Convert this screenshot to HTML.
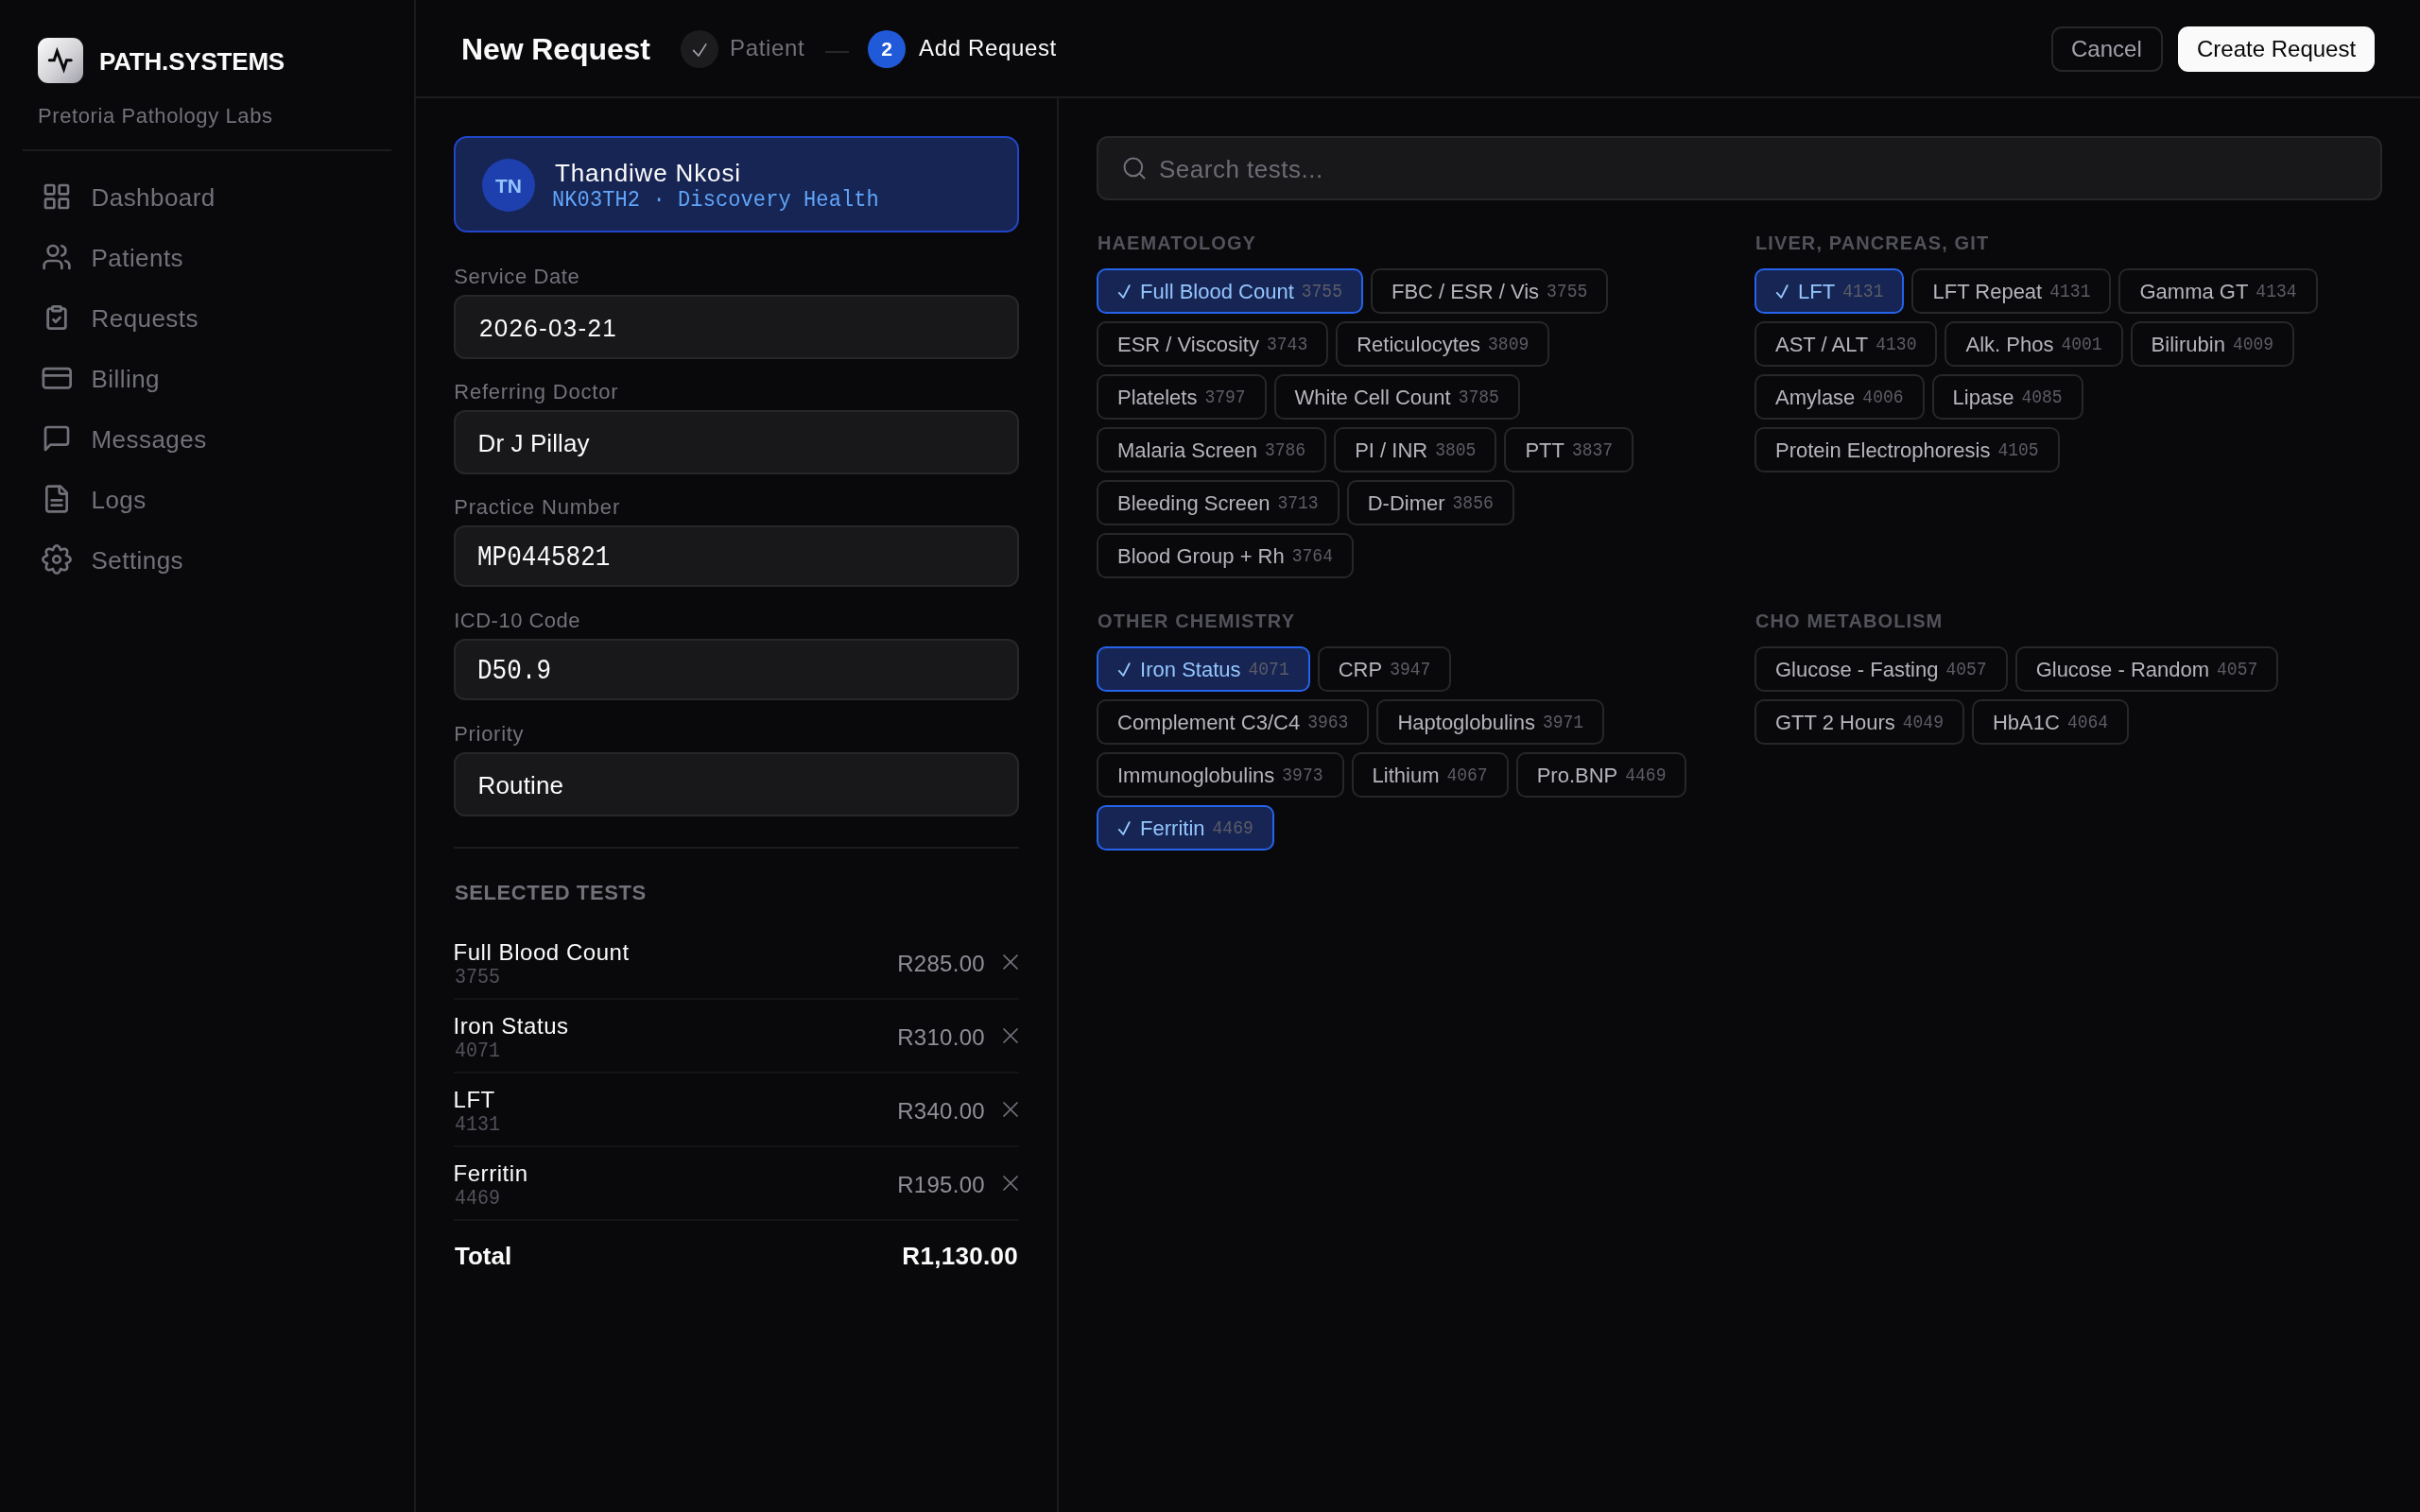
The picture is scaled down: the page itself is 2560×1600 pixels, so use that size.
<!DOCTYPE html>
<html><head><meta charset="utf-8"><title>New Request</title><style>
html,body{margin:0;padding:0;}
body{width:2560px;height:1600px;overflow:hidden;background:#09090b;position:relative;font-family:'Liberation Sans', sans-serif;}
.t{position:absolute;line-height:1;white-space:nowrap;font-family:'Liberation Sans', sans-serif;}
.t.m{font-family:'Liberation Mono', monospace;transform:scaleY(1.11);transform-origin:0 0.77em;}
svg{display:block}
#root{position:absolute;left:0;top:0;width:2560px;height:1600px;will-change:transform;}
.chips{position:absolute;width:664px;display:flex;flex-wrap:wrap;gap:8px;}
.chip{box-sizing:border-box;height:48px;border:2px solid #27272a;border-radius:10px;padding:0 20px;display:inline-flex;align-items:center;white-space:pre;font-family:'Liberation Sans', sans-serif;font-size:22px;color:#b4b4bc;background:#09090b;padding-top:2px;}
.chip .code{font-family:'Liberation Mono', monospace;font-size:18px;color:#5c5c66;margin-left:8px;transform:scaleY(1.09);transform-origin:0 0.83em;}
.chip.sel{border-color:#2563eb;background:#172554;color:#93c5fd;}
.chip .ck{display:block;flex:none;width:24.12px;height:16px;}
</style></head>
<body><div id="root">
<div style="position:absolute;left:0px;top:0px;width:440px;height:1600px;box-sizing:border-box;border-right:2px solid #1c1c1f"></div><div style="position:absolute;left:40px;top:40px;width:48px;height:48px;border-radius:11px;background:linear-gradient(135deg,#fafafa 0%,#d4d4d8 55%,#a1a1aa 100%)"></div><svg style="position:absolute;left:0;top:0" width="100" height="100" viewBox="0 0 100 100" fill="none" stroke="#09090b" stroke-width="3" stroke-linecap="round" stroke-linejoin="miter" stroke-miterlimit="10"><path d="M52.3 63.8H57.2L60.4 54.2L67.5 73.2L70.5 63.8H75.2"/></svg><div class="t" style="left:105px;top:51.64px;font-size:26px;color:#fafafa;font-weight:700;letter-spacing:-0.2px;">PATH.SYSTEMS</div><div class="t" style="left:40px;top:112.08px;font-size:22px;color:#71717a;font-weight:400;letter-spacing:0.6px;">Pretoria Pathology Labs</div><div style="position:absolute;left:24px;top:158px;width:390px;height:2px;box-sizing:border-box;background:#1c1c1f"></div><svg style="position:absolute;left:44px;top:192px" width="32" height="32" viewBox="0 0 24 24" fill="none" stroke="#71717a" stroke-width="2" stroke-linecap="round" stroke-linejoin="round"><rect width="7" height="7" x="3" y="3" rx="1"/><rect width="7" height="7" x="14" y="3" rx="1"/><rect width="7" height="7" x="14" y="14" rx="1"/><rect width="7" height="7" x="3" y="14" rx="1"/></svg><div class="t" style="left:96.5px;top:195.64px;font-size:26px;color:#71717a;font-weight:400;letter-spacing:0.45px;">Dashboard</div><svg style="position:absolute;left:44px;top:256px" width="32" height="32" viewBox="0 0 24 24" fill="none" stroke="#71717a" stroke-width="2" stroke-linecap="round" stroke-linejoin="round"><path d="M16 21v-2a4 4 0 0 0-4-4H6a4 4 0 0 0-4 4v2"/><circle cx="9" cy="7" r="4"/><path d="M22 21v-2a4 4 0 0 0-3-3.87"/><path d="M16 3.13a4 4 0 0 1 0 7.75"/></svg><div class="t" style="left:96.5px;top:259.64px;font-size:26px;color:#71717a;font-weight:400;letter-spacing:0.45px;">Patients</div><svg style="position:absolute;left:46px;top:322px" width="28" height="28" viewBox="0 0 24 24" fill="none" stroke="#71717a" stroke-width="2.4" stroke-linecap="round" stroke-linejoin="round"><rect width="8" height="4" x="8" y="2" rx="1" ry="1"/><path d="M16 4h2a2 2 0 0 1 2 2v14a2 2 0 0 1-2 2H6a2 2 0 0 1-2-2V6a2 2 0 0 1 2-2h2"/><path d="m9 14 2 2 4-4"/></svg><div class="t" style="left:96.5px;top:323.64px;font-size:26px;color:#71717a;font-weight:400;letter-spacing:0.45px;">Requests</div><svg style="position:absolute;left:42.85px;top:382.75px" width="34.5" height="34.5" viewBox="0 0 24 24" fill="none" stroke="#71717a" stroke-width="1.9" stroke-linecap="round" stroke-linejoin="round"><rect width="20" height="14" x="2" y="5" rx="2"/><line x1="2" x2="22" y1="10" y2="10"/></svg><div class="t" style="left:96.5px;top:387.64px;font-size:26px;color:#71717a;font-weight:400;letter-spacing:0.45px;">Billing</div><svg style="position:absolute;left:44px;top:448px" width="32" height="32" viewBox="0 0 24 24" fill="none" stroke="#71717a" stroke-width="2" stroke-linecap="round" stroke-linejoin="round"><path d="M21 15a2 2 0 0 1-2 2H7l-4 4V5a2 2 0 0 1 2-2h14a2 2 0 0 1 2 2z"/></svg><div class="t" style="left:96.5px;top:451.64px;font-size:26px;color:#71717a;font-weight:400;letter-spacing:0.45px;">Messages</div><svg style="position:absolute;left:44px;top:512px" width="32" height="32" viewBox="0 0 24 24" fill="none" stroke="#71717a" stroke-width="2" stroke-linecap="round" stroke-linejoin="round"><path d="M15 2H6a2 2 0 0 0-2 2v16a2 2 0 0 0 2 2h12a2 2 0 0 0 2-2V7Z"/><path d="M14 2v4a2 2 0 0 0 2 2h4"/><path d="M16 13H8"/><path d="M16 17H8"/></svg><div class="t" style="left:96.5px;top:515.64px;font-size:26px;color:#71717a;font-weight:400;letter-spacing:0.45px;">Logs</div><svg style="position:absolute;left:44px;top:576px" width="32" height="32" viewBox="-16 -16 32 32" fill="none" stroke="#71717a" stroke-width="2.6" stroke-linejoin="round"><path d="M0.00 -14.60 L0.38 -14.57 L0.76 -14.49 L1.13 -14.35 L1.49 -14.15 L1.83 -13.91 L2.16 -13.62 L2.46 -13.29 L2.75 -12.92 L3.01 -12.52 L3.24 -12.09 L3.45 -11.65 L3.64 -11.20 L3.80 -10.74 L3.95 -10.29 L4.09 -9.89 L4.48 -10.07 L4.90 -10.28 L5.34 -10.49 L5.80 -10.68 L6.26 -10.84 L6.73 -10.98 L7.19 -11.08 L7.65 -11.14 L8.10 -11.16 L8.54 -11.13 L8.96 -11.06 L9.35 -10.94 L9.71 -10.78 L10.03 -10.57 L10.32 -10.32 L10.57 -10.03 L10.78 -9.71 L10.94 -9.35 L11.06 -8.96 L11.13 -8.54 L11.16 -8.10 L11.14 -7.65 L11.08 -7.19 L10.98 -6.73 L10.84 -6.26 L10.68 -5.80 L10.49 -5.34 L10.28 -4.90 L10.07 -4.48 L9.89 -4.09 L10.29 -3.95 L10.74 -3.80 L11.20 -3.64 L11.65 -3.45 L12.09 -3.24 L12.52 -3.01 L12.92 -2.75 L13.29 -2.46 L13.62 -2.16 L13.91 -1.83 L14.15 -1.49 L14.35 -1.13 L14.49 -0.76 L14.57 -0.38 L14.60 -0.00 L14.57 0.38 L14.49 0.76 L14.35 1.13 L14.15 1.49 L13.91 1.83 L13.62 2.16 L13.29 2.46 L12.92 2.75 L12.52 3.01 L12.09 3.24 L11.65 3.45 L11.20 3.64 L10.74 3.80 L10.29 3.95 L9.89 4.09 L10.07 4.48 L10.28 4.90 L10.49 5.34 L10.68 5.80 L10.84 6.26 L10.98 6.73 L11.08 7.19 L11.14 7.65 L11.16 8.10 L11.13 8.54 L11.06 8.96 L10.94 9.35 L10.78 9.71 L10.57 10.03 L10.32 10.32 L10.03 10.57 L9.71 10.78 L9.35 10.94 L8.96 11.06 L8.54 11.13 L8.10 11.16 L7.65 11.14 L7.19 11.08 L6.73 10.98 L6.26 10.84 L5.80 10.68 L5.34 10.49 L4.90 10.28 L4.48 10.07 L4.09 9.89 L3.95 10.29 L3.80 10.74 L3.64 11.20 L3.45 11.65 L3.24 12.09 L3.01 12.52 L2.75 12.92 L2.46 13.29 L2.16 13.62 L1.83 13.91 L1.49 14.15 L1.13 14.35 L0.76 14.49 L0.38 14.57 L0.00 14.60 L-0.38 14.57 L-0.76 14.49 L-1.13 14.35 L-1.49 14.15 L-1.83 13.91 L-2.16 13.62 L-2.46 13.29 L-2.75 12.92 L-3.01 12.52 L-3.24 12.09 L-3.45 11.65 L-3.64 11.20 L-3.80 10.74 L-3.95 10.29 L-4.09 9.89 L-4.48 10.07 L-4.90 10.28 L-5.34 10.49 L-5.80 10.68 L-6.26 10.84 L-6.73 10.98 L-7.19 11.08 L-7.65 11.14 L-8.10 11.16 L-8.54 11.13 L-8.96 11.06 L-9.35 10.94 L-9.71 10.78 L-10.03 10.57 L-10.32 10.32 L-10.57 10.03 L-10.78 9.71 L-10.94 9.35 L-11.06 8.96 L-11.13 8.54 L-11.16 8.10 L-11.14 7.65 L-11.08 7.19 L-10.98 6.73 L-10.84 6.26 L-10.68 5.80 L-10.49 5.34 L-10.28 4.90 L-10.07 4.48 L-9.89 4.09 L-10.29 3.95 L-10.74 3.80 L-11.20 3.64 L-11.65 3.45 L-12.09 3.24 L-12.52 3.01 L-12.92 2.75 L-13.29 2.46 L-13.62 2.16 L-13.91 1.83 L-14.15 1.49 L-14.35 1.13 L-14.49 0.76 L-14.57 0.38 L-14.60 0.00 L-14.57 -0.38 L-14.49 -0.76 L-14.35 -1.13 L-14.15 -1.49 L-13.91 -1.83 L-13.62 -2.16 L-13.29 -2.46 L-12.92 -2.75 L-12.52 -3.01 L-12.09 -3.24 L-11.65 -3.45 L-11.20 -3.64 L-10.74 -3.80 L-10.29 -3.95 L-9.89 -4.09 L-10.07 -4.48 L-10.28 -4.90 L-10.49 -5.34 L-10.68 -5.80 L-10.84 -6.26 L-10.98 -6.73 L-11.08 -7.19 L-11.14 -7.65 L-11.16 -8.10 L-11.13 -8.54 L-11.06 -8.96 L-10.94 -9.35 L-10.78 -9.71 L-10.57 -10.03 L-10.32 -10.32 L-10.03 -10.57 L-9.71 -10.78 L-9.35 -10.94 L-8.96 -11.06 L-8.54 -11.13 L-8.10 -11.16 L-7.65 -11.14 L-7.19 -11.08 L-6.73 -10.98 L-6.26 -10.84 L-5.80 -10.68 L-5.34 -10.49 L-4.90 -10.28 L-4.48 -10.07 L-4.09 -9.89 L-3.95 -10.29 L-3.80 -10.74 L-3.64 -11.20 L-3.45 -11.65 L-3.24 -12.09 L-3.01 -12.52 L-2.75 -12.92 L-2.46 -13.29 L-2.16 -13.62 L-1.83 -13.91 L-1.49 -14.15 L-1.13 -14.35 L-0.76 -14.49 L-0.38 -14.57 L-0.00 -14.60Z"/><circle cx="0" cy="0" r="3.8"/></svg><div class="t" style="left:96.5px;top:579.64px;font-size:26px;color:#71717a;font-weight:400;letter-spacing:0.45px;">Settings</div><div style="position:absolute;left:440px;top:102px;width:2120px;height:2px;box-sizing:border-box;background:#1c1c1f"></div><div class="t" style="left:488px;top:36.48px;font-size:32px;color:#fafafa;font-weight:700;letter-spacing:-0.1px;">New Request</div><div style="position:absolute;left:720px;top:32px;width:40px;height:40px;border-radius:50%;background:#1c1c1f"></div><svg style="position:absolute;left:700px;top:30px" width="60" height="40" viewBox="700 30 60 40" fill="none" stroke="#a1a1aa" stroke-width="1.7" stroke-linecap="round" stroke-linejoin="round"><path d="M733.6 53.3L739 59L746.8 46.9"/></svg><div class="t" style="left:772px;top:39.36px;font-size:24px;color:#71717a;font-weight:400;letter-spacing:0.65px;">Patient</div><div style="position:absolute;left:873px;top:54px;width:25px;height:2px;box-sizing:border-box;background:#27272a"></div><div style="position:absolute;left:918px;top:32px;width:40px;height:40px;border-radius:50%;background:#215ad9"></div><div class="t" style="left:918px;width:40px;text-align:center;top:40.94px;font-size:21px;font-weight:700;color:#fff">2</div><div class="t" style="left:972px;top:39.36px;font-size:24px;color:#fafafa;font-weight:400;letter-spacing:0.65px;">Add Request</div><div style="position:absolute;left:2170px;top:28px;width:118px;height:48px;box-sizing:border-box;border:2px solid #27272a;border-radius:11px"></div><div class="t" style="left:2191px;top:39.86px;font-size:24px;color:#a1a1aa;font-weight:400;letter-spacing:0px;">Cancel</div><div style="position:absolute;left:2304px;top:28px;width:208px;height:48px;box-sizing:border-box;border-radius:11px;background:#fafafa"></div><div class="t" style="left:2324px;top:39.86px;font-size:24px;color:#09090b;font-weight:400;letter-spacing:0px;">Create Request</div><div style="position:absolute;left:1118px;top:104px;width:2px;height:1496px;box-sizing:border-box;background:#1c1c1f"></div><div style="position:absolute;left:480px;top:144px;width:598px;height:102px;box-sizing:border-box;border:2px solid #2146c8;border-radius:14px;background:#172554"></div><div style="position:absolute;left:510px;top:168px;width:56px;height:56px;border-radius:50%;background:#1e40af"></div><div class="t" style="left:510px;width:56px;text-align:center;top:185.64px;font-size:21px;font-weight:700;color:#93c5fd">TN</div><div class="t" style="left:587px;top:169.64px;font-size:26px;color:#fafafa;font-weight:400;letter-spacing:0.85px;">Thandiwe Nkosi</div><div class="t m" style="left:584px;top:201.56px;font-size:22px;color:#60a5fa;letter-spacing:0.1px;">NK03TH2 · Discovery Health</div><div class="t" style="left:480.2px;top:282.28px;font-size:22px;color:#71717a;font-weight:400;letter-spacing:0.6px;">Service Date</div><div style="position:absolute;left:480px;top:312px;width:598px;height:68px;box-sizing:border-box;border:2px solid #27272a;border-radius:12px;background:#18181b"></div><div class="t" style="left:507px;top:334.14px;font-size:26px;color:#fafafa;font-weight:400;letter-spacing:1.3px;">2026-03-21</div><div class="t" style="left:480.2px;top:404.08px;font-size:22px;color:#71717a;font-weight:400;letter-spacing:0.8px;">Referring Doctor</div><div style="position:absolute;left:480px;top:434px;width:598px;height:68px;box-sizing:border-box;border:2px solid #27272a;border-radius:12px;background:#18181b"></div><div class="t" style="left:505.5px;top:456.14px;font-size:26px;color:#fafafa;font-weight:400;letter-spacing:0.1px;">Dr J Pillay</div><div class="t" style="left:480.2px;top:525.88px;font-size:22px;color:#71717a;font-weight:400;letter-spacing:0.8px;">Practice Number</div><div style="position:absolute;left:480px;top:556px;width:598px;height:65px;box-sizing:border-box;border:2px solid #27272a;border-radius:12px;background:#18181b"></div><div class="t m" style="left:505px;top:578.48px;font-size:26px;color:#fafafa;letter-spacing:0px;">MP0445821</div><div class="t" style="left:480.2px;top:645.78px;font-size:22px;color:#71717a;font-weight:400;letter-spacing:0.5px;">ICD-10 Code</div><div style="position:absolute;left:480px;top:676px;width:598px;height:65px;box-sizing:border-box;border:2px solid #27272a;border-radius:12px;background:#18181b"></div><div class="t m" style="left:505px;top:698.48px;font-size:26px;color:#fafafa;letter-spacing:0px;">D50.9</div><div class="t" style="left:480.2px;top:766.08px;font-size:22px;color:#71717a;font-weight:400;letter-spacing:0.7px;">Priority</div><div style="position:absolute;left:480px;top:796px;width:598px;height:68px;box-sizing:border-box;border:2px solid #27272a;border-radius:12px;background:#18181b"></div><div class="t" style="left:505.5px;top:818.14px;font-size:26px;color:#fafafa;font-weight:400;letter-spacing:0.15px;">Routine</div><div style="position:absolute;left:480px;top:896px;width:598px;height:2px;box-sizing:border-box;background:#1c1c1f"></div><div class="t" style="left:481px;top:934.08px;font-size:22px;color:#71717a;font-weight:700;letter-spacing:0.6px;">SELECTED TESTS</div><div class="t" style="left:479.5px;top:995.86px;font-size:24px;color:#fafafa;font-weight:400;letter-spacing:0.55px;">Full Blood Count</div><div class="t m" style="left:481px;top:1024.50px;font-size:20px;color:#52525b;letter-spacing:0px;">3755</div><div class="t" style="right:1518px;top:1008.36px;font-size:24px;color:#8e8e97;font-weight:400;letter-spacing:0.3px">R285.00</div><svg style="position:absolute;left:1055px;top:1004px" width="28" height="28" viewBox="0 0 24 24" fill="none" stroke="#71717a" stroke-width="1.5" stroke-linecap="round" stroke-linejoin="round"><path d="M18 6 6 18"/><path d="m6 6 12 12"/></svg><div style="position:absolute;left:480px;top:1056px;width:598px;height:2px;box-sizing:border-box;background:#141417"></div><div class="t" style="left:479.5px;top:1073.86px;font-size:24px;color:#fafafa;font-weight:400;letter-spacing:0.55px;">Iron Status</div><div class="t m" style="left:481px;top:1102.50px;font-size:20px;color:#52525b;letter-spacing:0px;">4071</div><div class="t" style="right:1518px;top:1086.36px;font-size:24px;color:#8e8e97;font-weight:400;letter-spacing:0.3px">R310.00</div><svg style="position:absolute;left:1055px;top:1082px" width="28" height="28" viewBox="0 0 24 24" fill="none" stroke="#71717a" stroke-width="1.5" stroke-linecap="round" stroke-linejoin="round"><path d="M18 6 6 18"/><path d="m6 6 12 12"/></svg><div style="position:absolute;left:480px;top:1134px;width:598px;height:2px;box-sizing:border-box;background:#141417"></div><div class="t" style="left:479.5px;top:1151.86px;font-size:24px;color:#fafafa;font-weight:400;letter-spacing:0.55px;">LFT</div><div class="t m" style="left:481px;top:1180.50px;font-size:20px;color:#52525b;letter-spacing:0px;">4131</div><div class="t" style="right:1518px;top:1164.36px;font-size:24px;color:#8e8e97;font-weight:400;letter-spacing:0.3px">R340.00</div><svg style="position:absolute;left:1055px;top:1160px" width="28" height="28" viewBox="0 0 24 24" fill="none" stroke="#71717a" stroke-width="1.5" stroke-linecap="round" stroke-linejoin="round"><path d="M18 6 6 18"/><path d="m6 6 12 12"/></svg><div style="position:absolute;left:480px;top:1212px;width:598px;height:2px;box-sizing:border-box;background:#141417"></div><div class="t" style="left:479.5px;top:1229.86px;font-size:24px;color:#fafafa;font-weight:400;letter-spacing:0.55px;">Ferritin</div><div class="t m" style="left:481px;top:1258.50px;font-size:20px;color:#52525b;letter-spacing:0px;">4469</div><div class="t" style="right:1518px;top:1242.36px;font-size:24px;color:#8e8e97;font-weight:400;letter-spacing:0.3px">R195.00</div><svg style="position:absolute;left:1055px;top:1238px" width="28" height="28" viewBox="0 0 24 24" fill="none" stroke="#71717a" stroke-width="1.5" stroke-linecap="round" stroke-linejoin="round"><path d="M18 6 6 18"/><path d="m6 6 12 12"/></svg><div style="position:absolute;left:480px;top:1290px;width:598px;height:2px;box-sizing:border-box;background:#141417"></div><div class="t" style="left:481px;top:1315.84px;font-size:26px;color:#fafafa;font-weight:700;letter-spacing:0px;">Total</div><div class="t" style="right:1483px;top:1315.84px;font-size:26px;color:#fafafa;font-weight:700;letter-spacing:0.3px">R1,130.00</div><div style="position:absolute;left:1160px;top:144px;width:1360px;height:68px;box-sizing:border-box;border:2px solid #27272a;border-radius:12px;background:#18181b"></div><svg style="position:absolute;left:1186px;top:164px" width="28" height="28" viewBox="0 0 24 24" fill="none" stroke="#71717a" stroke-width="1.7" stroke-linecap="round" stroke-linejoin="round"><circle cx="11" cy="11" r="8"/><path d="m21 21-4.3-4.3"/></svg><div class="t" style="left:1226px;top:165.64px;font-size:26px;color:#6b6b73;font-weight:400;letter-spacing:0.5px;">Search tests...</div><div class="t" style="left:1161px;top:247.30px;font-size:20px;color:#52525b;font-weight:700;letter-spacing:1.1px;">HAEMATOLOGY</div><div class="chips" style="left:1160px;top:284px"><div class="chip sel"><svg class="ck" width="24.12" height="16" viewBox="0 0 24.12 16" fill="none" stroke="#93c5fd" stroke-width="1.9" stroke-linecap="round" stroke-linejoin="round"><path d="M1.8 8.9L6.3 13.9L12.7 1.2"/></svg>Full Blood Count<span class="code">3755</span></div><div class="chip">FBC / ESR / Vis<span class="code">3755</span></div><div class="chip">ESR / Viscosity<span class="code">3743</span></div><div class="chip">Reticulocytes<span class="code">3809</span></div><div class="chip">Platelets<span class="code">3797</span></div><div class="chip">White Cell Count<span class="code">3785</span></div><div class="chip">Malaria Screen<span class="code">3786</span></div><div class="chip">PI / INR<span class="code">3805</span></div><div class="chip">PTT<span class="code">3837</span></div><div class="chip">Bleeding Screen<span class="code">3713</span></div><div class="chip">D-Dimer<span class="code">3856</span></div><div class="chip">Blood Group + Rh<span class="code">3764</span></div></div><div class="t" style="left:1857px;top:247.30px;font-size:20px;color:#52525b;font-weight:700;letter-spacing:1.1px;">LIVER, PANCREAS, GIT</div><div class="chips" style="left:1856px;top:284px"><div class="chip sel"><svg class="ck" width="24.12" height="16" viewBox="0 0 24.12 16" fill="none" stroke="#93c5fd" stroke-width="1.9" stroke-linecap="round" stroke-linejoin="round"><path d="M1.8 8.9L6.3 13.9L12.7 1.2"/></svg>LFT<span class="code">4131</span></div><div class="chip">LFT Repeat<span class="code">4131</span></div><div class="chip">Gamma GT<span class="code">4134</span></div><div class="chip">AST / ALT<span class="code">4130</span></div><div class="chip">Alk. Phos<span class="code">4001</span></div><div class="chip">Bilirubin<span class="code">4009</span></div><div class="chip">Amylase<span class="code">4006</span></div><div class="chip">Lipase<span class="code">4085</span></div><div class="chip">Protein Electrophoresis<span class="code">4105</span></div></div><div class="t" style="left:1161px;top:647.00px;font-size:20px;color:#52525b;font-weight:700;letter-spacing:1.1px;">OTHER CHEMISTRY</div><div class="chips" style="left:1160px;top:684px"><div class="chip sel"><svg class="ck" width="24.12" height="16" viewBox="0 0 24.12 16" fill="none" stroke="#93c5fd" stroke-width="1.9" stroke-linecap="round" stroke-linejoin="round"><path d="M1.8 8.9L6.3 13.9L12.7 1.2"/></svg>Iron Status<span class="code">4071</span></div><div class="chip">CRP<span class="code">3947</span></div><div class="chip">Complement C3/C4<span class="code">3963</span></div><div class="chip">Haptoglobulins<span class="code">3971</span></div><div class="chip">Immunoglobulins<span class="code">3973</span></div><div class="chip">Lithium<span class="code">4067</span></div><div class="chip">Pro.BNP<span class="code">4469</span></div><div class="chip sel"><svg class="ck" width="24.12" height="16" viewBox="0 0 24.12 16" fill="none" stroke="#93c5fd" stroke-width="1.9" stroke-linecap="round" stroke-linejoin="round"><path d="M1.8 8.9L6.3 13.9L12.7 1.2"/></svg>Ferritin<span class="code">4469</span></div></div><div class="t" style="left:1857px;top:647.00px;font-size:20px;color:#52525b;font-weight:700;letter-spacing:1.1px;">CHO METABOLISM</div><div class="chips" style="left:1856px;top:684px"><div class="chip">Glucose - Fasting<span class="code">4057</span></div><div class="chip">Glucose - Random<span class="code">4057</span></div><div class="chip">GTT 2 Hours<span class="code">4049</span></div><div class="chip">HbA1C<span class="code">4064</span></div></div>
</div></body></html>
